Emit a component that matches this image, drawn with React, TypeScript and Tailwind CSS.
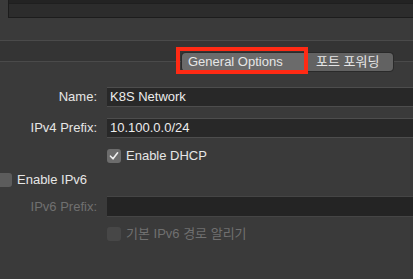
import React from "react";

const font = { fontFamily: '"Liberation Sans", "Noto Sans CJK KR", sans-serif' };

function Check({ checked = false, disabled = false }: { checked?: boolean; disabled?: boolean }) {
  return (
    <div
      className={
        "w-[14px] h-[14px] rounded-[3px] flex items-center justify-center shrink-0 " +
        (disabled ? "bg-[#474747]" : checked ? "bg-[#6c6c6c]" : "bg-[#5c5c5c]")
      }
    >
      {checked && (
        <svg width="10" height="10" viewBox="0 0 10 10">
          <path d="M1.5 5.2 L4 7.8 L8.6 1.8" fill="none" stroke="#efefef" strokeWidth="1.6" strokeLinecap="round" strokeLinejoin="round" />
        </svg>
      )}
    </div>
  );
}

export default function App() {
  return (
    <div className="w-[413px] h-[279px] overflow-hidden bg-[#3a3a3a] text-[13px] text-[#e6e6e6]" style={font}>
      {/* top list box */}
      <div className="ml-[8px] h-[18px] border-l border-b border-[#1c1c1c] flex flex-col">
        <div className="h-[4px] bg-[#232323] border-b border-[#1f1f1f]" />
        <div className="flex-1 bg-[#2c2c2c]" />
      </div>

      {/* tab strip */}
      <div className="mt-[22px] h-[22px] border-t border-b border-[#4a4a4a] bg-[#343434]" />

      <div className="relative -mt-[10px] flex justify-end pr-[19px]">
        <div className="flex h-[20px] border border-[#2a2a2a] rounded-[4px]">
          <div className="relative w-[122px] bg-[#6b6b6b] rounded-l-[4px] flex items-center pl-[6px]">
            General Options
            <div className="absolute -left-[6px] -top-[6px] -right-[4px] -bottom-[3px] border-[4px] border-[#ff2a14]" />
          </div>
          <div className="w-[89px] bg-[#626262] rounded-r-[4px] flex items-center pl-[12px]">포트 포워딩</div>
        </div>
      </div>

      {/* form */}
      <div className="mt-[15px] grid grid-cols-[97px_1fr] gap-x-[10px]">
        <div className="h-[20px] flex items-center justify-end">Name:</div>
        <div className="h-[20px] bg-[#282828] border-t border-b border-[#4d4d4d] flex items-center pl-[3px] text-[#ececec]">
          K8S Network
        </div>

        <div className="mt-[11px] h-[20px] flex items-center justify-end">IPv4 Prefix:</div>
        <div className="mt-[11px] h-[20px] bg-[#282828] border-t border-b border-[#4d4d4d] flex items-center pl-[3px] text-[#ececec]">
          10.100.0.0/24
        </div>

        <div />
        <div className="mt-[11px] h-[14px] flex items-center gap-[5px]">
          <Check checked />
          <span>Enable DHCP</span>
        </div>
      </div>

      <div className="mt-[10px] ml-[-2px] h-[14px] flex items-center gap-[5px]">
        <Check />
        <span>Enable IPv6</span>
      </div>

      <div className="mt-[9px] grid grid-cols-[97px_1fr] gap-x-[10px] text-[#707070]">
        <div className="h-[21px] flex items-center justify-end">IPv6 Prefix:</div>
        <div className="h-[21px] bg-[#242424] border-t border-b border-[#454545]" />

        <div />
        <div className="mt-[10px] h-[14px] flex items-center gap-[5px]">
          <Check disabled />
          <span>기본 IPv6 경로 알리기</span>
        </div>
      </div>
    </div>
  );
}
